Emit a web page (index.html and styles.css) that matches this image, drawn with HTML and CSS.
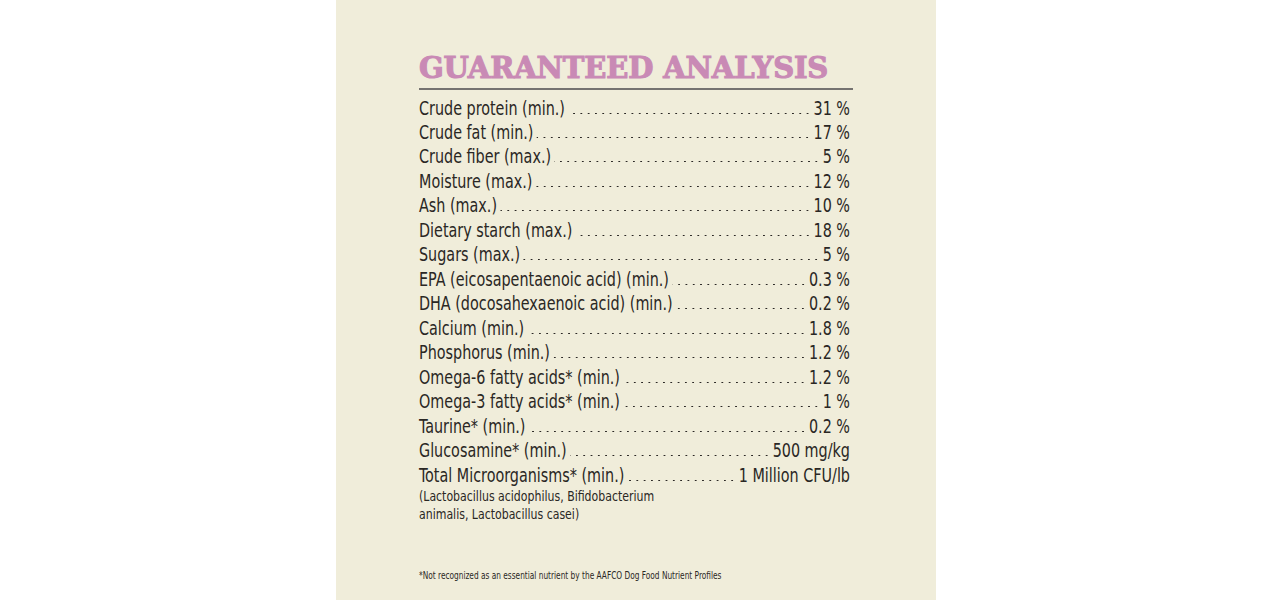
FILE: index.html
```html
<!DOCTYPE html>
<html>
<head>
<meta charset="utf-8">
<link rel="stylesheet" href="styles.css">
</head>
<body>
<div class="panel">
  <h1 class="title">GUARANTEED ANALYSIS</h1>
  <div class="content">
    <div class="rows">
      <div class="row"><span class="label">Crude protein (min.)</span><span class="dots"></span><span class="value">31 %</span></div>
      <div class="row"><span class="label">Crude fat (min.)</span><span class="dots"></span><span class="value">17 %</span></div>
      <div class="row"><span class="label">Crude fiber (max.)</span><span class="dots"></span><span class="value">5 %</span></div>
      <div class="row"><span class="label">Moisture (max.)</span><span class="dots"></span><span class="value">12 %</span></div>
      <div class="row"><span class="label">Ash (max.)</span><span class="dots"></span><span class="value">10 %</span></div>
      <div class="row"><span class="label">Dietary starch (max.)</span><span class="dots"></span><span class="value">18 %</span></div>
      <div class="row"><span class="label">Sugars (max.)</span><span class="dots"></span><span class="value">5 %</span></div>
      <div class="row"><span class="label">EPA (eicosapentaenoic acid) (min.)</span><span class="dots"></span><span class="value">0.3 %</span></div>
      <div class="row"><span class="label">DHA (docosahexaenoic acid) (min.)</span><span class="dots"></span><span class="value">0.2 %</span></div>
      <div class="row"><span class="label">Calcium (min.)</span><span class="dots"></span><span class="value">1.8 %</span></div>
      <div class="row"><span class="label">Phosphorus (min.)</span><span class="dots"></span><span class="value">1.2 %</span></div>
      <div class="row"><span class="label">Omega-6 fatty acids* (min.)</span><span class="dots"></span><span class="value">1.2 %</span></div>
      <div class="row"><span class="label">Omega-3 fatty acids* (min.)</span><span class="dots"></span><span class="value">1 %</span></div>
      <div class="row"><span class="label">Taurine* (min.)</span><span class="dots"></span><span class="value">0.2 %</span></div>
      <div class="row"><span class="label">Glucosamine* (min.)</span><span class="dots"></span><span class="value">500 mg/kg</span></div>
      <div class="row"><span class="label">Total Microorganisms* (min.)</span><span class="dots"></span><span class="value">1 Million CFU/lb</span></div>
    </div>
    <p class="sub">(Lactobacillus acidophilus, Bifidobacterium<br>animalis, Lactobacillus casei)</p>
    <p class="foot">*Not recognized as an essential nutrient by the AAFCO Dog Food Nutrient Profiles</p>
  </div>
</div>
</body>
</html>
```
FILE: styles.css
```css
html, body {
  margin: 0;
  padding: 0;
  background: #ffffff;
}
.panel {
  width: 600px;
  height: 600px;
  margin: 0 auto;
  background: #f0edda;
  box-sizing: border-box;
  padding: 51px 83px 0 83px;
  color: #2a2724;
  font-family: "DejaVu Sans Condensed", "Liberation Sans", sans-serif;
  overflow: hidden;
}
.title {
  margin: 0;
  font-family: "DejaVu Serif", serif;
  font-weight: 700;
  font-size: 29px;
  line-height: 34px;
  letter-spacing: -0.15px;
  color: #c98ab5;
  -webkit-text-stroke: 1.1px #c98ab5;
  border-bottom: 2px solid #757370;
  padding-bottom: 3px;
  white-space: nowrap;
}
/* emulate the condensed typeface of the original */
.content {
  width: 516.7px;
  margin-right: -82.7px;
  transform: scaleX(0.84);
  transform-origin: left top;
}
.rows {
  padding-right: 3.6px;
  margin-top: 5.5px;
}
.row {
  display: flex;
  align-items: baseline;
  font-size: 19px;
  line-height: 24.47px;
  white-space: nowrap;
}
.dots {
  flex: 1;
  height: 3px;
  margin: 0 3px 0 4px;
  background-image: radial-gradient(ellipse 1.2px 1px at center, #2a2724 80%, transparent 100%);
  background-size: 8.7px 3px;
  background-position: right bottom;
  background-repeat: repeat-x;
}
.sub {
  margin: 1px 0 0;
  font-size: 14.5px;
  line-height: 17.6px;
}
.foot {
  margin: 46.5px 0 0;
  font-size: 9.8px;
  line-height: 12px;
}
```
